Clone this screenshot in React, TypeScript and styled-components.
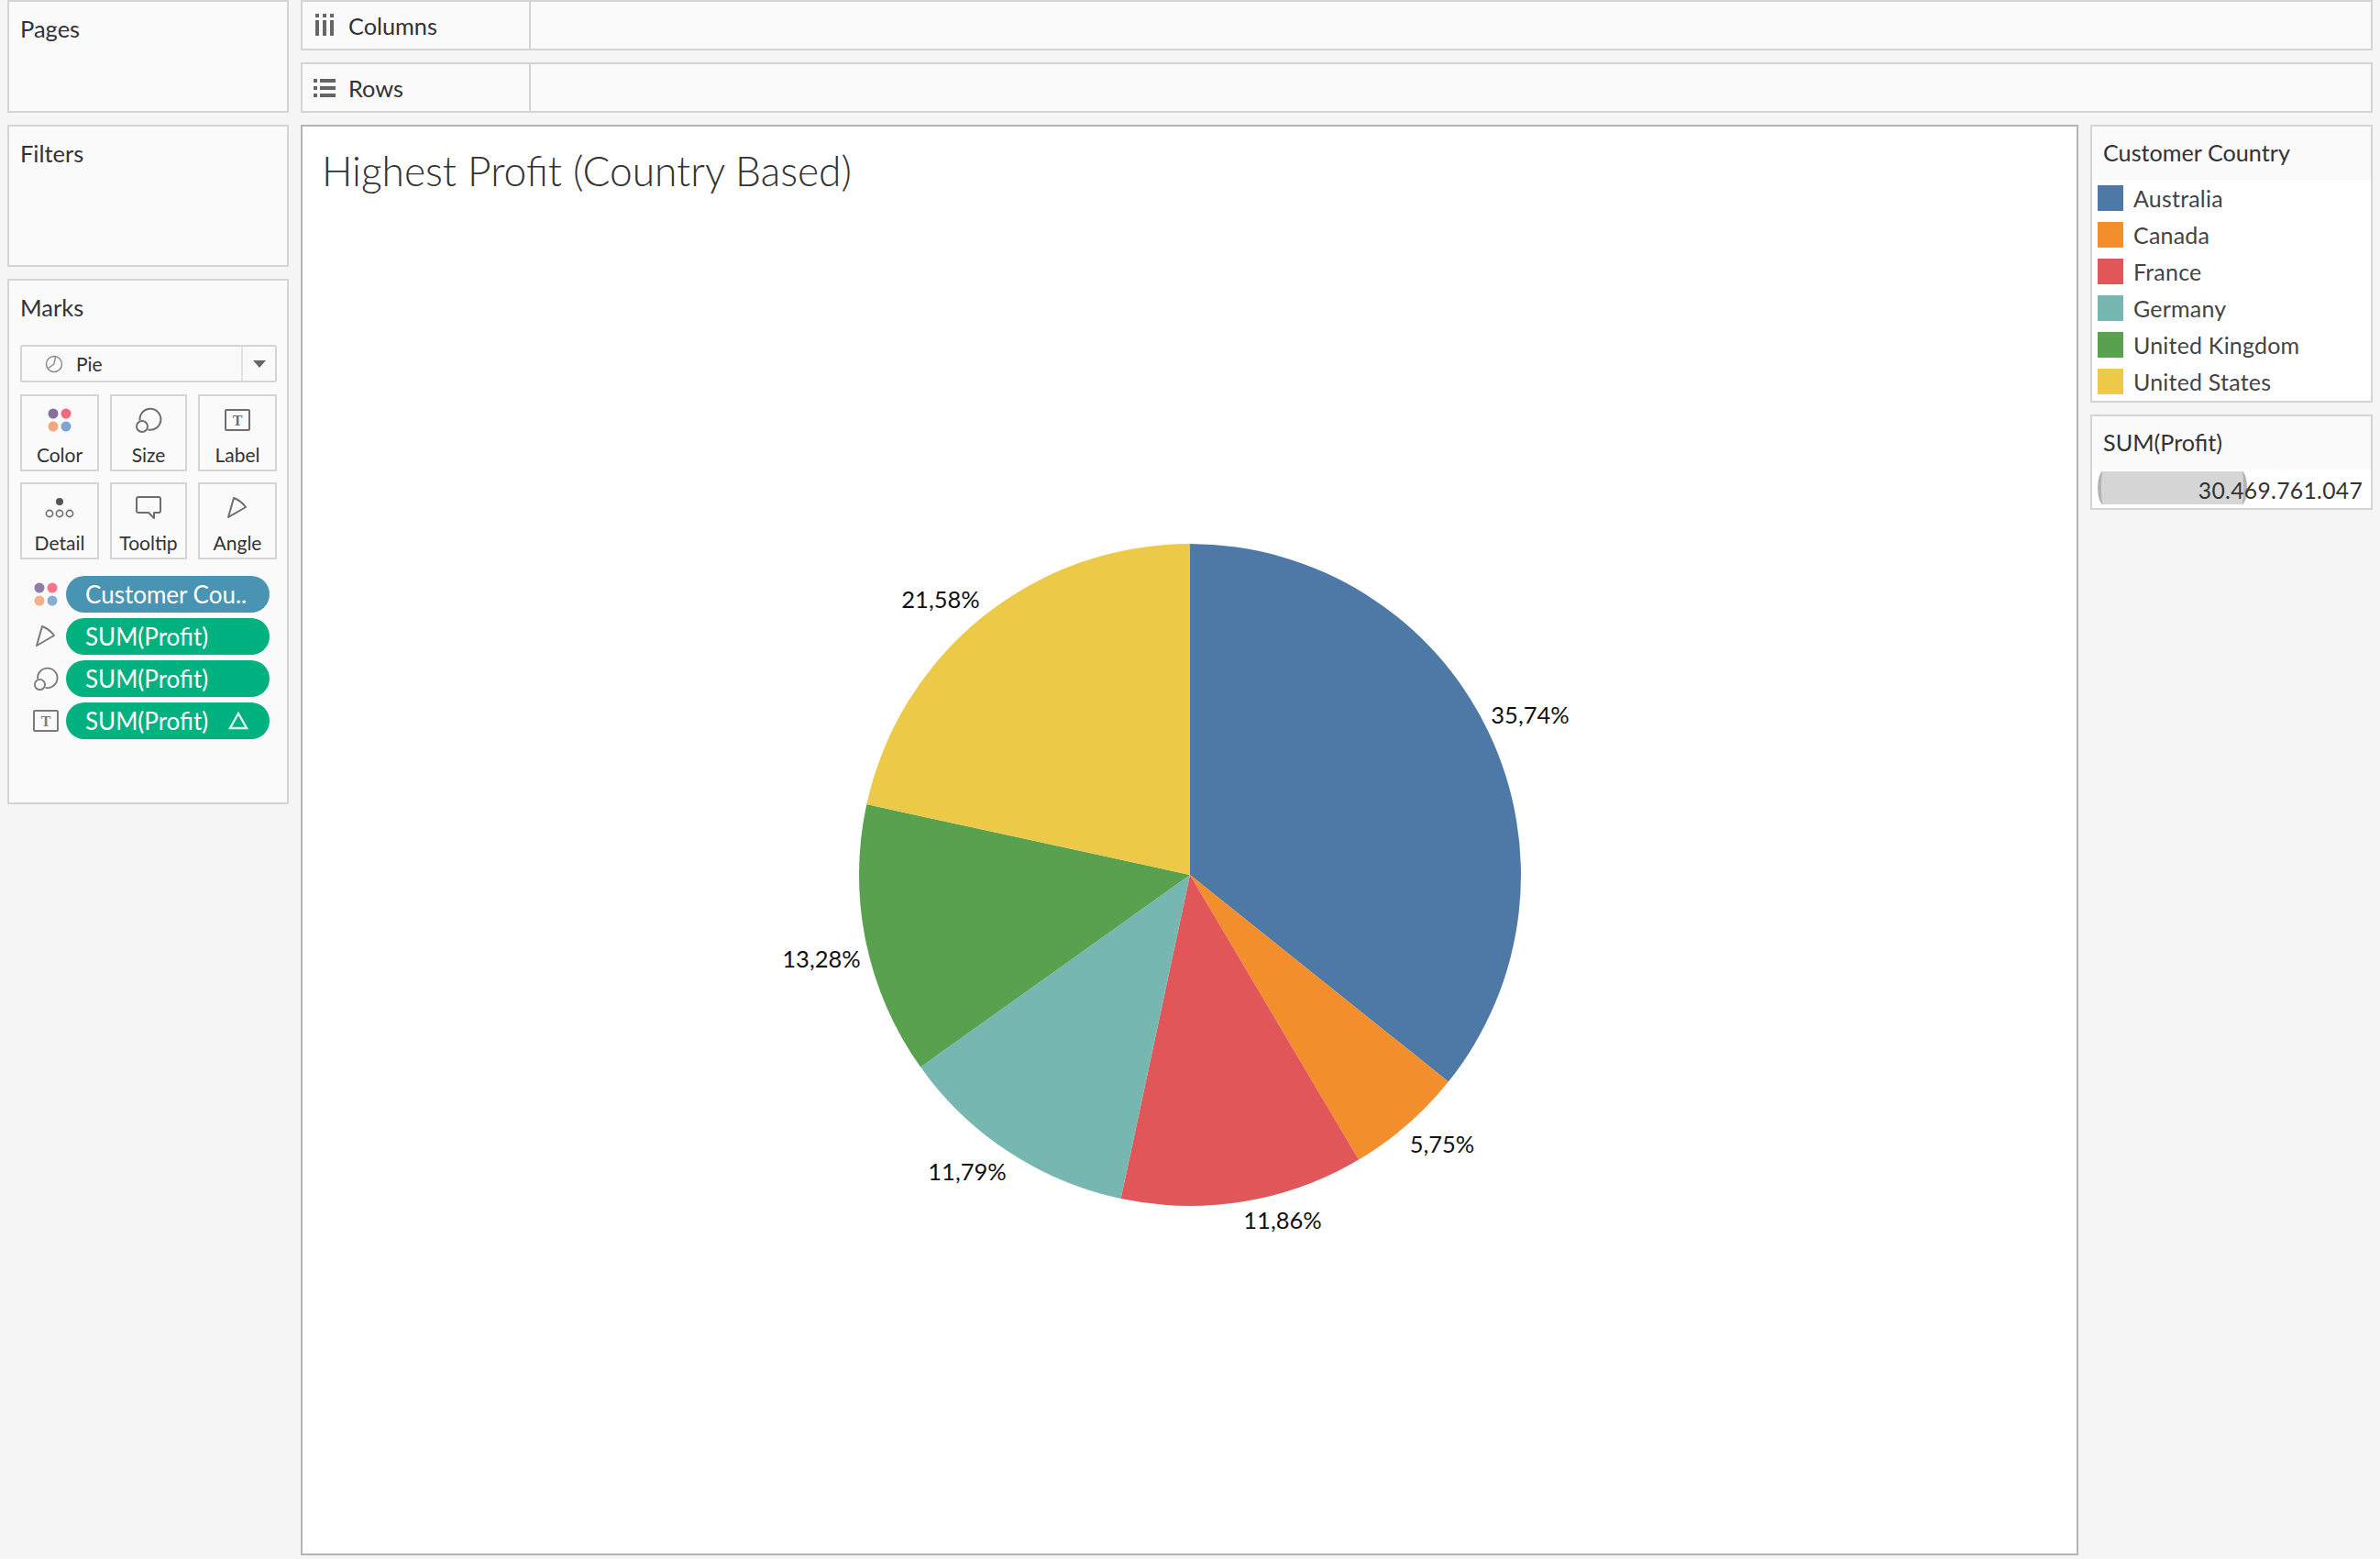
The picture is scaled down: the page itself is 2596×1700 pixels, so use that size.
import React from 'react'
import styled, { createGlobalStyle } from 'styled-components'

const GlobalStyle = createGlobalStyle`
  html, body {
    margin: 0;
    padding: 0;
    background: #f5f5f5;
  }
  * {
    box-sizing: border-box;
  }
`

const FONT = `Lato, "Open Sans", "Liberation Sans", sans-serif`

const Page = styled.div`
  width: 2596px;
  height: 1700px;
  overflow: hidden;
  display: grid;
  grid-template-columns: 307px 1939px 308px;
  grid-template-rows: 123px 1fr;
  column-gap: 13px;
  row-gap: 13px;
  padding: 0 8px 4px 8px;
  background: #f5f5f5;
  font-family: ${FONT};
  color: #333;
`

const Sidebar = styled.div`
  grid-column: 1;
  grid-row: 1 / 3;
  display: flex;
  flex-direction: column;
  gap: 13px;
`

const Panel = styled.section<{ $height: number }>`
  height: ${p => p.$height}px;
  background: #fafafa;
  border: 2px solid #d4d4d4;
  padding: 0 11px 0 12px;
`

const PanelTitle = styled.div`
  font-size: 25.5px;
  line-height: 30px;
  padding-top: 14px;
  color: #333;
`

const Shelves = styled.div`
  grid-column: 2 / 4;
  grid-row: 1;
  display: flex;
  flex-direction: column;
  gap: 13px;
`

const Shelf = styled.div`
  flex: 1;
  display: flex;
  background: #fafafa;
  border: 2px solid #d4d4d4;
`

const ShelfLabel = styled.div`
  width: 249px;
  display: flex;
  align-items: center;
  gap: 14px;
  padding-left: 12px;
  border-right: 2px solid #d4d4d4;
  font-size: 25.3px;
  color: #333;
`

const View = styled.main`
  grid-column: 2;
  grid-row: 2;
  display: flex;
  flex-direction: column;
  background: #fff;
  border: 2px solid #b4b4b4;
`

const ViewTitle = styled.h1`
  margin: 0;
  height: 76px;
  padding: 23px 0 0 21px;
  font-size: 44.3px;
  line-height: 50px;
  font-weight: 300;
  color: #333;
`

const Chart = styled.div`
  flex: 1;
  display: flex;
  align-items: center;
  justify-content: center;
`

const PieLabel = styled.text`
  font-family: ${FONT};
  font-size: 25.5px;
  fill: #111;
  text-anchor: middle;
`

const Legends = styled.aside`
  grid-column: 3;
  grid-row: 2;
  display: flex;
  flex-direction: column;
  gap: 13px;
`

const LegendCard = styled.section`
  background: #fff;
  border: 2px solid #d4d4d4;
`

const LegendHeader = styled.div<{ $height: number }>`
  height: ${p => p.$height}px;
  display: flex;
  align-items: center;
  padding: 0 0 2px 12px;
  background: #fafafa;
  font-size: 25.2px;
  color: #333;
`

const LegendList = styled.div`
  display: flex;
  flex-direction: column;
  gap: 12px;
  padding: 6px 6px 7px;
`

const LegendRow = styled.div`
  display: flex;
  align-items: center;
  gap: 11px;
  height: 28px;
  font-size: 25px;
  letter-spacing: 0.2px;
  color: #444;
`

const Swatch = styled.span<{ $color: string }>`
  width: 28px;
  height: 28px;
  background: ${p => p.$color};
`

const SizeRow = styled.div`
  position: relative;
  height: 40px;
  margin-top: 2px;
  display: flex;
  align-items: center;
  justify-content: flex-end;
  padding: 0 9px 0 0;
  font-size: 24.7px;
  letter-spacing: 0.3px;
  color: #333;
`

const SizeBar = styled.div`
  position: absolute;
  left: 6px;
  top: 0;
  width: 163px;
  height: 36px;
  background: #d6d6d6;
  border-left: 4px solid #b4b4b4;
  border-right: 4px solid #b4b4b4;
  border-radius: 6px / 18px;
`

const SizeValue = styled.span`
  position: relative;
`

const MarkTypeSelect = styled.div`
  margin-top: 26px;
  height: 41px;
  display: flex;
  align-items: center;
  border: 2px solid #d4d4d4;
  border-radius: 3px;
`

const MarkTypeName = styled.div`
  flex: 1;
  display: flex;
  align-items: center;
  gap: 14px;
  padding-left: 25px;
  font-size: 21px;
  color: #333;
`

const MarkTypeArrow = styled.div`
  width: 37px;
  height: 100%;
  display: flex;
  align-items: center;
  justify-content: center;
  border-left: 2px solid #e2e2e2;

  &::after {
    content: '';
    border-left: 7px solid transparent;
    border-right: 7px solid transparent;
    border-top: 8px solid #666;
  }
`

const MarkGrid = styled.div`
  margin-top: 13px;
  display: grid;
  grid-template-columns: 86px 84px 86px;
  grid-auto-rows: 84px;
  justify-content: space-between;
  row-gap: 12px;
`

const MarkButton = styled.div`
  display: flex;
  flex-direction: column;
  align-items: center;
  border: 2px solid #d4d4d4;
  font-size: 21px;
  color: #333;
`

const MarkIcon = styled.div`
  height: 49px;
  display: flex;
  align-items: center;
  justify-content: center;
  padding-top: 2px;
`

const MarkCaption = styled.div`
  line-height: 30px;
`

const Pills = styled.div`
  margin-top: 18px;
  display: flex;
  flex-direction: column;
  gap: 6px;
`

const PillRow = styled.div`
  display: flex;
  align-items: center;
  gap: 8px;
  padding-left: 14px;
`

const PillIcon = styled.div`
  width: 28px;
  display: flex;
  justify-content: center;
  opacity: 0.9;
`

const Pill = styled.div<{ $color: string }>`
  width: 222px;
  height: 40px;
  display: flex;
  align-items: center;
  justify-content: space-between;
  padding: 0 23px 0 21px;
  border-radius: 20px;
  background: ${p => p.$color};
  color: #fff;
  font-size: 26px;
`

const ICON = '#6e6e6e'

const ColumnsIcon = () => (
  <svg width="24" height="26" viewBox="0 0 24 26">
    <path d="M2 0h4v4H2zM10 0h4v4h-4zM18 0h4v4h-4zM2 7h4v17H2zM10 7h4v17h-4zM18 7h4v17h-4z" fill="#666" />
  </svg>
)

const RowsIcon = () => (
  <svg width="24" height="22" viewBox="0 0 24 22">
    <path d="M0 1h4v4H0zM7 1h17v4H7zM0 9h4v4H0zM7 9h17v4H7zM0 17h4v4H0zM7 17h17v4H7z" fill="#666" />
  </svg>
)

const PieTypeIcon = () => (
  <svg width="20" height="20" viewBox="0 0 20 20" fill="none" stroke="#888" strokeWidth="1.4">
    <circle cx="10" cy="10" r="8.5" />
    <path d="M10 10L11.5 1.7M10 10L3.5 14.5" />
  </svg>
)

const ColorIcon = () => (
  <svg width="26" height="26" viewBox="0 0 26 26">
    <circle cx="6" cy="6" r="5.5" fill="#86709b" />
    <circle cx="20" cy="6" r="5.5" fill="#f5677f" />
    <circle cx="6" cy="20" r="5.5" fill="#f2a77c" />
    <circle cx="20" cy="20" r="5.5" fill="#7ca5cf" />
  </svg>
)

const SizeIcon = () => (
  <svg width="30" height="28" viewBox="0 0 30 28" fill="none" stroke={ICON} strokeWidth="2">
    <path d="M5.5 14.5A11.5 11.5 0 1 1 14.5 24.5" />
    <circle cx="8" cy="21" r="6" />
  </svg>
)

const LabelIcon = () => (
  <svg width="28" height="24" viewBox="0 0 28 24" fill="none">
    <rect x="1" y="1" width="26" height="22" rx="1" stroke={ICON} strokeWidth="2" />
    <text x="14" y="17.5" textAnchor="middle" fontFamily="Liberation Serif, serif" fontSize="16" fontWeight="700" fill={ICON}>T</text>
  </svg>
)

const DetailIcon = () => (
  <svg width="32" height="24" viewBox="0 0 32 24" fill="none" stroke={ICON} strokeWidth="1.6">
    <circle cx="16" cy="5" r="4" fill="#555" stroke="none" />
    <circle cx="5" cy="18" r="3.6" />
    <circle cx="16" cy="18" r="3.6" />
    <circle cx="27" cy="18" r="3.6" />
  </svg>
)

const TooltipIcon = () => (
  <svg width="28" height="26" viewBox="0 0 28 26" fill="none" stroke={ICON} strokeWidth="2" strokeLinejoin="round">
    <path d="M3 1h22a2 2 0 0 1 2 2v13a2 2 0 0 1-2 2h-5v6l-6-6H3a2 2 0 0 1-2-2V3a2 2 0 0 1 2-2z" />
  </svg>
)

const AngleIcon = () => (
  <svg width="22" height="24" viewBox="0 0 22 24" fill="none" stroke={ICON} strokeWidth="2" strokeLinejoin="round">
    <path d="M7 1L1 22L20 11Q15 4 7 1z" />
  </svg>
)

const DeltaIcon = () => (
  <svg width="22" height="20" viewBox="0 0 22 20" fill="none" stroke="#dff3ec" strokeWidth="2.4">
    <path d="M11 2L20 18H2z" />
  </svg>
)

const slices = [
  { name: 'Australia', share: 35.74, color: '#4e79a7' },
  { name: 'Canada', share: 5.75, color: '#f28e2b' },
  { name: 'France', share: 11.86, color: '#e15759' },
  { name: 'Germany', share: 11.79, color: '#76b7b2' },
  { name: 'United Kingdom', share: 13.28, color: '#59a14f' },
  { name: 'United States', share: 21.58, color: '#edc948' },
]

const labels = [
  { text: '35,74%', x: 371, y: -173 },
  { text: '5,75%', x: 275, y: 295 },
  { text: '11,86%', x: 101, y: 378 },
  { text: '11,79%', x: -243, y: 325 },
  { text: '13,28%', x: -402, y: 93 },
  { text: '21,58%', x: -272, y: -299 },
]

const RADIUS = 361

function slicePaths() {
  const total = slices.reduce((sum, s) => sum + s.share, 0)
  let start = 0
  return slices.map(s => {
    const end = start + (s.share / total) * Math.PI * 2
    const large = end - start > Math.PI ? 1 : 0
    const d = `M0 0L${RADIUS * Math.sin(start)} ${-RADIUS * Math.cos(start)}A${RADIUS} ${RADIUS} 0 ${large} 1 ${RADIUS * Math.sin(end)} ${-RADIUS * Math.cos(end)}Z`
    start = end
    return { d, color: s.color, name: s.name }
  })
}

const markButtons = [
  { name: 'Color', icon: <ColorIcon /> },
  { name: 'Size', icon: <SizeIcon /> },
  { name: 'Label', icon: <LabelIcon /> },
  { name: 'Detail', icon: <DetailIcon /> },
  { name: 'Tooltip', icon: <TooltipIcon /> },
  { name: 'Angle', icon: <AngleIcon /> },
]

const pills = [
  { icon: <ColorIcon />, text: 'Customer Cou..', color: '#4a94b3' },
  { icon: <AngleIcon />, text: 'SUM(Profit)', color: '#02b180' },
  { icon: <SizeIcon />, text: 'SUM(Profit)', color: '#02b180' },
  { icon: <LabelIcon />, text: 'SUM(Profit)', color: '#02b180', delta: true },
]

function App() {
  return (
    <Page>
      <GlobalStyle />
      <Sidebar>
        <Panel $height={123}>
          <PanelTitle>Pages</PanelTitle>
        </Panel>
        <Panel $height={155}>
          <PanelTitle>Filters</PanelTitle>
        </Panel>
        <Panel $height={573}>
          <PanelTitle>Marks</PanelTitle>
          <MarkTypeSelect>
            <MarkTypeName>
              <PieTypeIcon />
              Pie
            </MarkTypeName>
            <MarkTypeArrow />
          </MarkTypeSelect>
          <MarkGrid>
            {markButtons.map(b => (
              <MarkButton key={b.name}>
                <MarkIcon>{b.icon}</MarkIcon>
                <MarkCaption>{b.name}</MarkCaption>
              </MarkButton>
            ))}
          </MarkGrid>
          <Pills>
            {pills.map((p, i) => (
              <PillRow key={i}>
                <PillIcon>{p.icon}</PillIcon>
                <Pill $color={p.color}>
                  {p.text}
                  {p.delta && <DeltaIcon />}
                </Pill>
              </PillRow>
            ))}
          </Pills>
        </Panel>
      </Sidebar>

      <Shelves>
        <Shelf>
          <ShelfLabel>
            <ColumnsIcon />
            Columns
          </ShelfLabel>
        </Shelf>
        <Shelf>
          <ShelfLabel>
            <RowsIcon />
            Rows
          </ShelfLabel>
        </Shelf>
      </Shelves>

      <View>
        <ViewTitle>Highest Profit (Country Based)</ViewTitle>
        <Chart>
          <svg width="1000" height="1000" viewBox="-500 -500 1000 1000">
            {slicePaths().map(s => (
              <path key={s.name} d={s.d} fill={s.color} />
            ))}
            {labels.map(l => (
              <PieLabel key={l.text} x={l.x} y={l.y + 8}>{l.text}</PieLabel>
            ))}
          </svg>
        </Chart>
      </View>

      <Legends>
        <LegendCard>
          <LegendHeader $height={58}>Customer Country</LegendHeader>
          <LegendList>
            {slices.map(s => (
              <LegendRow key={s.name}>
                <Swatch $color={s.color} />
                {s.name}
              </LegendRow>
            ))}
          </LegendList>
        </LegendCard>
        <LegendCard>
          <LegendHeader $height={58}>SUM(Profit)</LegendHeader>
          <SizeRow>
            <SizeBar />
            <SizeValue>30.469.761.047</SizeValue>
          </SizeRow>
        </LegendCard>
      </Legends>
    </Page>
  )
}

export default App
